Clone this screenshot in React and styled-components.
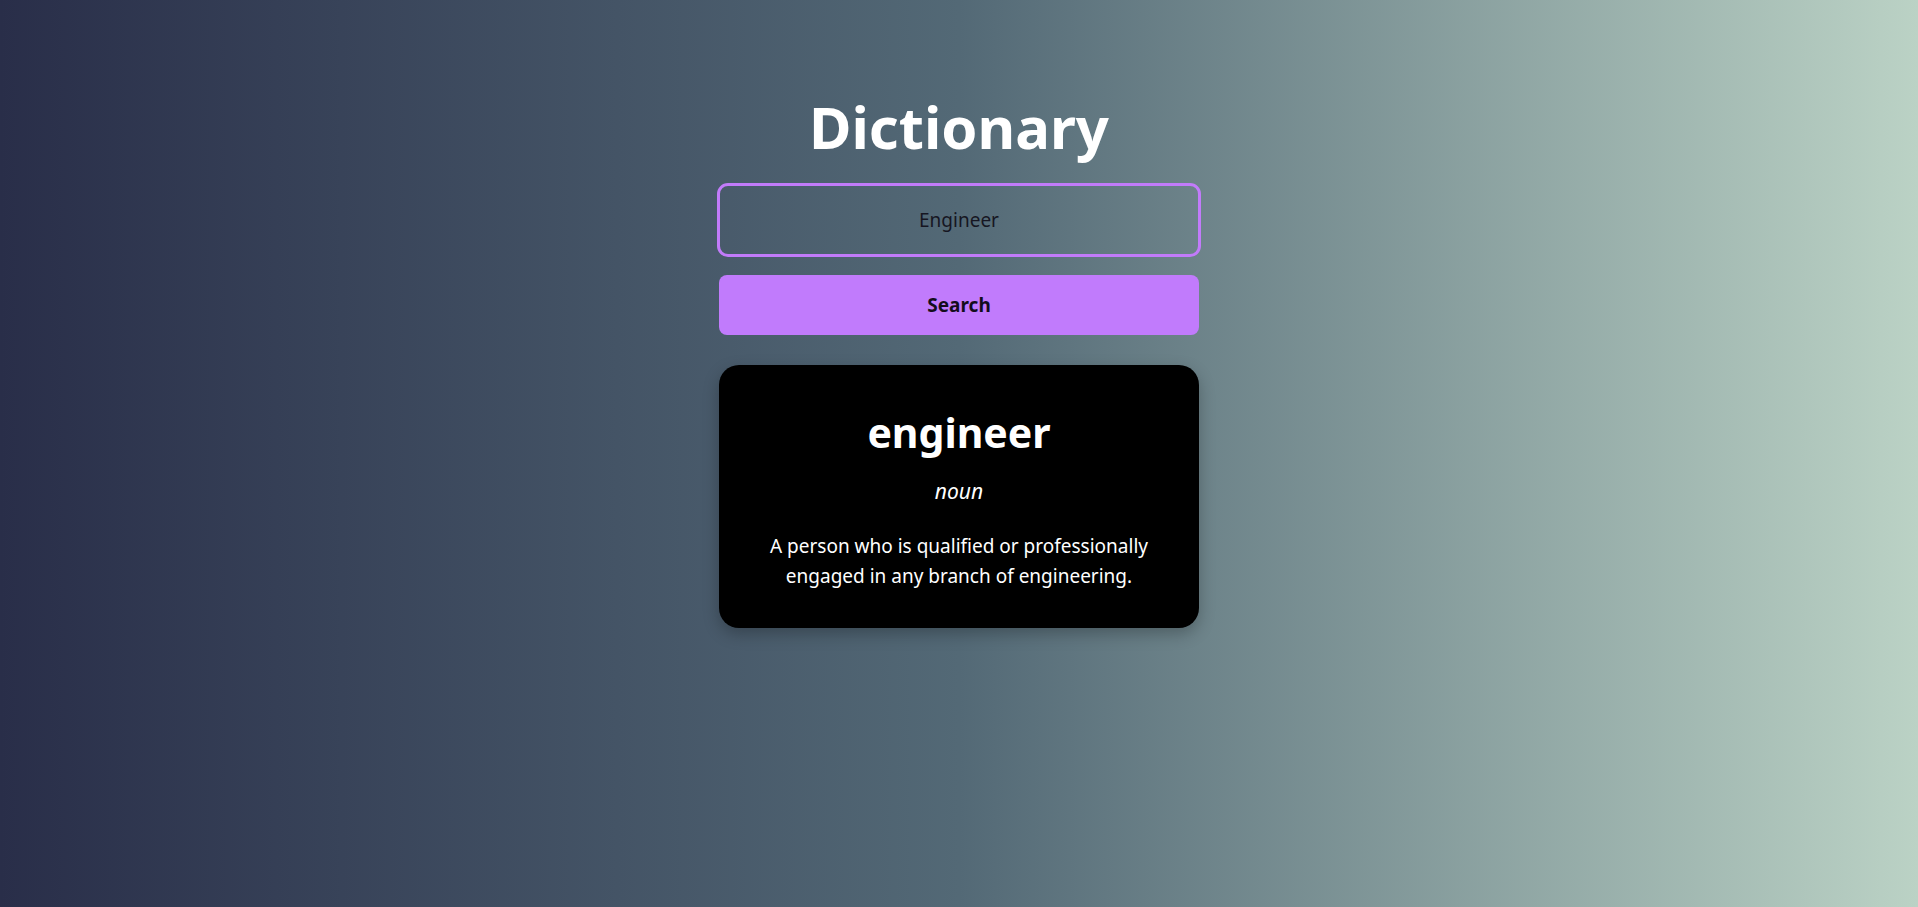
import React, { useState } from 'react';
import styled, { createGlobalStyle } from 'styled-components';

const GlobalStyle = createGlobalStyle`
  html, body {
    margin: 0;
    padding: 0;
  }

  body {
    font-family: "Noto Sans", "Open Sans", sans-serif;
    min-height: 100vh;
    background: linear-gradient(to right, #292e49, #536976, #bbd2c5);
  }
`;

const Page = styled.main`
  min-height: 100vh;
  display: flex;
  flex-direction: column;
  align-items: center;
  padding-top: 88px;
  box-sizing: border-box;
`;

const Title = styled.h1`
  margin: 0 0 18px;
  font-size: 58px;
  line-height: 77px;
  font-weight: 700;
  color: #ffffff;
`;

const SearchForm = styled.form`
  display: flex;
  flex-direction: column;
  align-items: center;
  gap: 18px;
  width: 484px;
`;

const WordInput = styled.input`
  width: 100%;
  height: 74px;
  box-sizing: border-box;
  border: 3px solid #c27bfa;
  border-radius: 11px;
  background: transparent;
  text-align: center;
  font-family: inherit;
  font-size: 19px;
  color: #161622;
  caret-color: #161622;
  outline: none;
`;

const SearchButton = styled.button`
  width: 480px;
  height: 60px;
  border: none;
  border-radius: 8px;
  background-color: #c17bfc;
  color: #140d1c;
  font-family: inherit;
  font-size: 19px;
  font-weight: 700;
  cursor: pointer;
`;

const ResultCard = styled.section`
  margin-top: 30px;
  width: 480px;
  box-sizing: border-box;
  padding: 43px 32px 37px;
  background-color: #000000;
  border-radius: 20px;
  box-shadow: 0 6px 16px rgba(0, 0, 0, 0.25);
  text-align: center;
  color: #ffffff;
`;

const Word = styled.h2`
  margin: 0;
  font-size: 41px;
  line-height: 49px;
  font-weight: 700;
`;

const PartOfSpeech = styled.p`
  margin: 21px 0 0;
  font-size: 21px;
  line-height: 27px;
  font-style: italic;
`;

const Definition = styled.p`
  margin: 26px 0 0;
  font-size: 19px;
  line-height: 30px;
`;

const App = () => {
  const [query, setQuery] = useState('Engineer');

  return (
    <>
      <GlobalStyle />
      <Page>
        <Title>Dictionary</Title>
        <SearchForm onSubmit={(e) => e.preventDefault()}>
          <WordInput
            value={query}
            onChange={(e) => setQuery(e.target.value)}
            autoFocus
          />
          <SearchButton type="submit">Search</SearchButton>
        </SearchForm>

        <ResultCard>
          <Word>engineer</Word>
          <PartOfSpeech>noun</PartOfSpeech>
          <Definition>
            A person who is qualified or professionally engaged in any branch of engineering.
          </Definition>
        </ResultCard>
      </Page>
    </>
  );
};

export default App;
